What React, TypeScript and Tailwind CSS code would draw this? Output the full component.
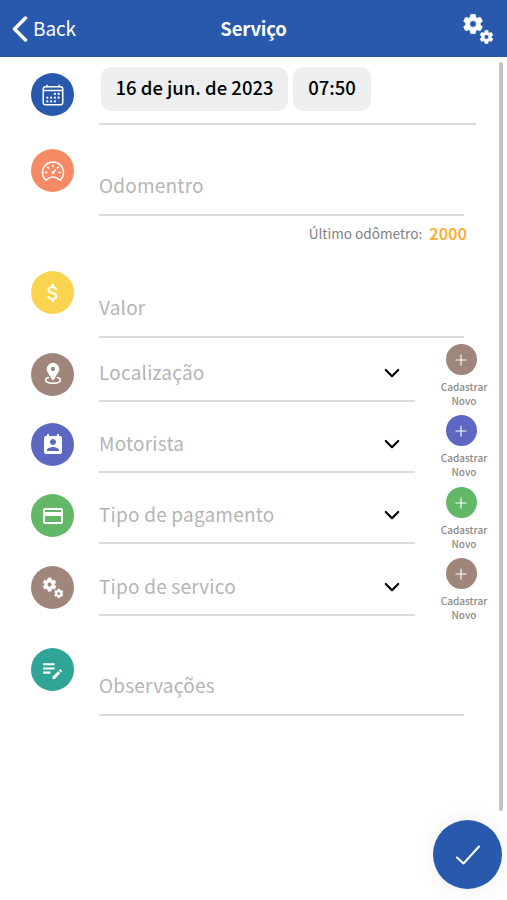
import type { ReactNode } from 'react';
import { IoAddOutline, IoCalendarOutline, IoSpeedometerOutline } from 'react-icons/io5';
import { MdAttachMoney, MdEditNote, MdPayment, MdPermContactCalendar } from 'react-icons/md';

const GEAR =
  'M19.14 12.94c.04-.3.06-.61.06-.94 0-.32-.02-.64-.07-.94l2.03-1.58a.49.49 0 0 0 .12-.61l-1.92-3.32a.488.488 0 0 0-.59-.22l-2.39.96c-.5-.38-1.03-.7-1.62-.94l-.36-2.54a.484.484 0 0 0-.48-.41h-3.84c-.24 0-.43.17-.47.41l-.36 2.54c-.59.24-1.13.57-1.62.94l-2.39-.96c-.22-.08-.47 0-.59.22L2.74 8.87c-.12.21-.08.47.12.61l2.03 1.58c-.05.3-.09.63-.09.94s.02.64.07.94l-2.03 1.58a.49.49 0 0 0-.12.61l1.92 3.32c.12.22.37.29.59.22l2.39-.96c.5.38 1.03.7 1.62.94l.36 2.54c.05.24.24.41.48.41h3.84c.24 0 .44-.17.47-.41l.36-2.54c.59-.24 1.13-.56 1.62-.94l2.39.96c.22.08.47 0 .59-.22l1.92-3.32c.12-.22.07-.47-.12-.61l-2.01-1.58ZM12 15.4a3.4 3.4 0 1 1 0-6.8 3.4 3.4 0 0 1 0 6.8Z';

function Gears({ className }: { className: string }) {
  return (
    <svg viewBox="0 0 32 32" className={className} fill="currentColor" stroke="currentColor" strokeWidth="0.8">
      <path d={GEAR} transform="translate(-1 -1)" />
      <path d={GEAR} transform="translate(16.3 15.8) scale(0.68)" />
    </svg>
  );
}

function LocationPin() {
  return (
    <svg viewBox="0 0 24 24" className="size-6" fill="none">
      <path d="M7.5 15.6C5.7 16.1 4.6 17 4.6 18.1c0 1.9 3.3 3.1 7.4 3.1s7.4-1.2 7.4-3.1c0-1.1-1.1-2-2.9-2.5" stroke="currentColor" strokeWidth="1.6" strokeLinecap="round" />
      <path fillRule="evenodd" d="M12 .8a6.3 6.3 0 0 0-6.3 6.3c0 3.1 2.8 5.4 5 10.2.5 1.1 2.1 1.1 2.6 0 2.2-4.8 5-7.1 5-10.2A6.3 6.3 0 0 0 12 .8Zm0 4a2.1 2.1 0 1 1 0 4.2a2.1 2.1 0 0 1 0-4.2Z" fill="currentColor" />
    </svg>
  );
}

function Circle({ color, children }: { color: string; children: ReactNode }) {
  return (
    <div className={`flex size-[43px] shrink-0 items-center justify-center rounded-full text-white ${color}`}>
      {children}
    </div>
  );
}

type FieldProps = { label: string; icon: ReactNode; color: string; height: string; iconTop: string };

function Field({ label, icon, color, height, iconTop }: FieldProps) {
  return (
    <div className={`flex pr-[43px] pl-[31px] ${height}`}>
      <div className={iconTop}>
        <Circle color={color}>{icon}</Circle>
      </div>
      <div className="ml-[25px] flex flex-1 items-end border-b-2 border-[#dcdcdc] pb-[15px]">
        <span className="text-[19px] leading-[28px] tracking-[0.2px] text-[#b5b5b5]">{label}</span>
      </div>
    </div>
  );
}

function SelectField({ label, icon, color, height, iconTop, addTop }: FieldProps & { addTop: string }) {
  return (
    <div className={`flex pl-[31px] ${height}`}>
      <div className={iconTop}>
        <Circle color={color}>{icon}</Circle>
      </div>
      <div className="ml-[25px] flex w-[316px] items-end justify-between border-b-2 border-[#dcdcdc] pr-[15px] pb-[14px]">
        <span className="text-[19px] leading-[28px] tracking-[0.2px] text-[#b5b5b5]">{label}</span>
        <svg viewBox="0 0 16 10" className="mb-[8px] h-[10px] w-4" fill="none" stroke="#000" strokeWidth="2.2" strokeLinecap="round" strokeLinejoin="round">
          <path d="M1.8 2 8 8.2 14.2 2" />
        </svg>
      </div>
      <div className={`ml-[19px] w-[60px] ${addTop}`}>
        <div className={`ml-[11.5px] flex size-[31px] items-center justify-center rounded-full text-white ${color}`}>
          <IoAddOutline className="size-[18px]" />
        </div>
        <p className="mt-[4.5px] text-center text-[10px] leading-[14.5px] font-medium text-[#8c8c8c]">
          Cadastrar
          <br />
          Novo
        </p>
      </div>
    </div>
  );
}

export default function App() {
  return (
    <div className="relative h-[900px] w-[507px] overflow-hidden bg-white font-['Noto_Sans_CJK_SC','Noto_Sans',sans-serif]">
      <header className="grid h-[57px] grid-cols-3 items-center bg-[#2859ac] text-white">
        <div className="flex items-center pl-[12px]">
          <svg viewBox="0 0 16 26" className="h-[26px] w-4" fill="none" stroke="currentColor" strokeWidth="3.5" strokeLinecap="round" strokeLinejoin="round">
            <path d="M13.5 2 2.5 13l11 11" />
          </svg>
          <span className="ml-[5px] text-[19px] tracking-[-0.1px]">Back</span>
        </div>
        <h1 className="text-center text-[18.5px] font-bold tracking-[-0.2px]">Serviço</h1>
        <div className="flex justify-end pr-[13px]">
          <Gears className="size-8" />
        </div>
      </header>

      <main>
        <div className="flex h-[68px] pr-[31px] pl-[31px]">
          <div className="pt-[16px]">
            <Circle color="bg-[#2859ac]">
              <IoCalendarOutline className="size-6" />
            </Circle>
          </div>
          <div className="ml-[25px] flex flex-1 gap-[5px] border-b-2 border-[#dcdcdc] pt-[10px] pl-[2px] text-[18.5px] leading-[41px] font-medium text-black">
            <span className="h-[44px] w-[187px] rounded-[10px] bg-[#edeeef] text-center whitespace-nowrap">16 de jun. de 2023</span>
            <span className="h-[44px] w-[78px] rounded-[10px] bg-[#edeeef] text-center">07:50</span>
          </div>
        </div>

        <Field label="Odomentro" icon={<IoSpeedometerOutline className="size-6" />} color="bg-[#f68a65]" height="h-[91px]" iconTop="pt-[24px]" />
        <div className="flex h-[31px] items-start justify-end pt-[5px] pr-[40px] leading-[24px]">
          <span className="text-[13.6px] text-[#808080]">Último odômetro:</span>
          <span className="ml-[7px] text-[16px] font-bold text-[#f9b13f]">2000</span>
        </div>
        <Field label="Valor" icon={<MdAttachMoney className="size-6" />} color="bg-[#fad34f]" height="h-[91px]" iconTop="pt-[24px]" />

        <SelectField label="Localização" icon={<LocationPin />} color="bg-[#a0857b]" height="h-[64px]" iconTop="pt-[14.5px]" addTop="pt-[6px]" />
        <SelectField label="Motorista" icon={<MdPermContactCalendar className="size-6" />} color="bg-[#5c68c1]" height="h-[71px]" iconTop="pt-[21px]" addTop="pt-[13px]" />
        <SelectField label="Tipo de pagamento" icon={<MdPayment className="size-6" />} color="bg-[#62b867]" height="h-[71px]" iconTop="pt-[21px]" addTop="pt-[14px]" />
        <SelectField label="Tipo de servico" icon={<Gears className="size-[22px]" />} color="bg-[#a0857b]" height="h-[72px]" iconTop="pt-[22px]" addTop="pt-[14px]" />

        <Field label="Observações" icon={<MdEditNote className="size-[25px]" />} color="bg-[#30a496]" height="h-[100px]" iconTop="pt-[32px]" />
      </main>

      <div className="absolute top-[62px] right-[4px] h-[749px] w-[4px] rounded-full bg-[#c3c3c3]" />

      <button className="absolute right-[5px] bottom-[11px] flex size-[69px] items-center justify-center rounded-full bg-[#2859ac] text-white shadow-[0_0_24px_rgba(0,0,0,0.07)]">
        <svg viewBox="0 0 24 20" className="h-5 w-6" fill="none" stroke="currentColor" strokeWidth="2" strokeLinecap="round" strokeLinejoin="round">
          <path d="M1 12.5 7.5 18.5 23 1.5" />
        </svg>
      </button>
    </div>
  );
}
